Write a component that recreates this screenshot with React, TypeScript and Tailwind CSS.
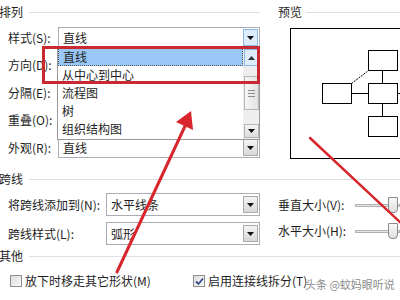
import React from 'react'

function DownTri() {
  return (
    <svg width="7" height="4" viewBox="0 0 7 4">
      <polygon points="0,0 7,0 3.5,4" fill="#111" />
    </svg>
  )
}

function UpTri() {
  return (
    <svg width="7" height="4" viewBox="0 0 7 4">
      <polygon points="0,4 7,4 3.5,0" fill="#333" />
    </svg>
  )
}

function DropButton({ hot }: { hot?: boolean }) {
  return (
    <div
      className={`w-[15px] h-[17px] mr-[1px] flex items-center justify-center border ${
        hot ? 'bg-[#dcecfc] border-[#8db8e4]' : 'bg-gradient-to-b from-[#f4f4f4] to-[#d8d8d8] border-[#a9a9a9]'
      }`}
    >
      <DownTri />
    </div>
  )
}

function Select({ value, hot, tall }: { value: string; hot?: boolean; tall?: boolean }) {
  return (
    <div className={`flex-1 flex items-center border border-[#abadb3] bg-white pl-[4px] ${tall ? 'h-[23px]' : 'h-[21px]'}`}>
      <span className="flex-1 leading-none pt-[1px]">{value}</span>
      <DropButton hot={hot} />
    </div>
  )
}

function Row({ label, value, h, hot }: { label: string; value: string; h: string; hot?: boolean }) {
  return (
    <div className={`flex items-center pl-[8px] ${h}`}>
      <span className="w-[50px]">{label}</span>
      <Select value={value} hot={hot} />
    </div>
  )
}

function Header({ title, className = '' }: { title: string; className?: string }) {
  return (
    <div className={`flex items-center ${className}`}>
      <span className="-ml-[1px]">{title}</span>
      <div className="flex-1 h-px bg-[#dcdfe3] ml-[6px]" />
    </div>
  )
}

function Slider({ label }: { label: string }) {
  return (
    <div className="flex items-center h-[26px]">
      <span className="w-[77px]">{label}</span>
      <div className="flex-1 relative h-[16px] flex items-center">
        <div className="w-full h-[3px] border border-[#b0b0b0] bg-[#e7e7e7]" />
        <div className="absolute left-[33px] top-0 w-[10px] h-[16px] border border-[#8a8a8a] bg-gradient-to-b from-[#fafafa] to-[#dedede] rounded-b-[4px]" />
      </div>
    </div>
  )
}

function Checkbox({ checked }: { checked?: boolean }) {
  return (
    <div className="w-[12px] h-[12px] border border-[#8e8f8f] bg-gradient-to-br from-[#dcdcdc] to-[#fbfbfb] flex items-center justify-center">
      {checked && (
        <svg width="9" height="9" viewBox="0 0 9 9">
          <polyline points="1,4.5 3.5,7 8,1.5" fill="none" stroke="#3b4f8c" strokeWidth="1.8" />
        </svg>
      )}
    </div>
  )
}

function Preview() {
  return (
    <svg width="110" height="131" viewBox="0 0 110 131" className="ml-[20px] mt-[4px] block">
      <rect x="0.5" y="0.5" width="115" height="130" fill="white" stroke="#000" strokeWidth="1" />
      <g fill="white" stroke="#000" strokeWidth="1">
        <rect x="78.5" y="22.5" width="29" height="20" />
        <rect x="32.5" y="55.5" width="29" height="20" />
        <rect x="78.5" y="55.5" width="29" height="20" />
        <rect x="78.5" y="88.5" width="29" height="20" />
      </g>
      <g stroke="#000" strokeWidth="1">
        <line x1="61.5" y1="65.5" x2="78.5" y2="65.5" />
        <line x1="107.5" y1="65.5" x2="110" y2="65.5" />
        <line x1="92.5" y1="42.5" x2="92.5" y2="55.5" />
        <line x1="92.5" y1="75.5" x2="92.5" y2="88.5" />
        <line x1="61.5" y1="55.5" x2="78.5" y2="42.5" strokeDasharray="2 1" />
      </g>
    </svg>
  )
}

const listItems = ['直线', '从中心到中心', '流程图', '树', '组织结构图']

function DropList() {
  return (
    <div className="absolute left-[57px] top-[47px] w-[203px] h-[93px] bg-white border border-[#9a9a9a] flex">
      <div className="flex-1 flex flex-col">
        {listItems.map((t, i) => (
          <div
            key={t}
            className={`h-[18px] flex items-center pl-[4px] leading-none ${
              i === 0 ? 'bg-[#99c8f7] border border-dotted border-[#555]' : ''
            }`}
          >
            {t}
          </div>
        ))}
      </div>
      <div className="w-[16px] bg-[#eeeeee] flex flex-col items-center py-[1px]">
        <div className="w-[15px] h-[17px] bg-[#dcecfc] border border-[#8db8e4] flex items-center justify-center">
          <UpTri />
        </div>
        <div className="w-[15px] h-[34px] mt-[10px] border border-[#b5b5b5] bg-gradient-to-r from-[#f6f6f6] to-[#e2e2e2] flex flex-col items-center justify-center gap-[2px]">
          <div className="w-[7px] h-px bg-[#8c8c8c]" />
          <div className="w-[7px] h-px bg-[#8c8c8c]" />
          <div className="w-[7px] h-px bg-[#8c8c8c]" />
        </div>
        <div className="flex-1" />
        <div className="w-[15px] h-[14px] border border-[#b5b5b5] bg-gradient-to-b from-[#f4f4f4] to-[#dcdcdc] flex items-center justify-center">
          <DownTri />
        </div>
      </div>
    </div>
  )
}

function Arrows() {
  return (
    <svg width="400" height="300" viewBox="0 0 400 300" className="absolute left-0 top-0 pointer-events-none">
      <g stroke="#d8262d" strokeWidth="3" strokeLinecap="round">
        <line x1="117" y1="272" x2="186" y2="124" />
        <line x1="310" y1="138" x2="402" y2="224" strokeWidth="2.5" />
      </g>
      <polygon points="191,111 193,130 176,122" fill="#d8262d" />
    </svg>
  )
}

export default function App() {
  return (
    <div className="w-[400px] h-[300px] relative overflow-hidden bg-white text-[12px] text-[#1e1e1e] font-['Noto_Sans_CJK_SC','Liberation_Sans',sans-serif]">
      {/* 排列 + 预览 */}
      <div className="flex">
        <div className="w-[260px] flex flex-col">
          <Header title="排列" className="h-[24px]" />
          <Row label="样式(S):" value="直线" h="h-[27px]" hot />
          <Row label="方向(D):" value="" h="h-[28px]" />
          <Row label="分隔(E):" value="" h="h-[27px]" />
          <Row label="重叠(O):" value="" h="h-[28px]" />
          <Row label="外观(R):" value="直线" h="h-[27px]" />
        </div>
        <div className="flex-1 ml-[10px] flex flex-col">
          <div className="h-[24px] flex items-center pl-[8px]">
            <span>预览</span>
            <div className="flex-1 h-px bg-[#dcdfe3] ml-[4px]" />
          </div>
          <Preview />
        </div>
      </div>

      {/* 跨线 */}
      <Header title="跨线" className="h-[22px] mt-[7px]" />
      <div className="flex">
        <div className="w-[260px] flex flex-col">
          <div className="flex items-center pl-[8px] h-[29px]">
            <span className="w-[98px]">将跨线添加到(N):</span>
            <Select value="水平线条" tall />
          </div>
          <div className="flex items-center pl-[8px] h-[29px]">
            <span className="w-[98px]">跨线样式(L):</span>
            <Select value="弧形" tall />
          </div>
        </div>
        <div className="flex-1 ml-[18px] pt-[2px] flex flex-col">
          <Slider label="垂直大小(V):" />
          <Slider label="水平大小(H):" />
        </div>
      </div>

      {/* 其他 */}
      <Header title="其他" className="h-[16px]" />
      <div className="h-[34px] flex items-center pl-[10px]">
        <div className="w-[183px] flex items-center">
          <Checkbox />
          <span className="ml-[3px]">放下时移走其它形状(M)</span>
        </div>
        <Checkbox checked />
        <span className="ml-[3px]">启用连接线拆分(T)</span>
      </div>

      <DropList />
      <div className="absolute left-[42px] top-[46px] w-[218px] h-[38px] border-[3px] border-[#c92a32]" />
      <Arrows />
      <div className="absolute left-[305px] top-[276px] text-[11px] text-[#8c8c8c] whitespace-nowrap [text-shadow:0_0_2px_white]">
        头条 @蚊妈眼听说
      </div>
    </div>
  )
}
